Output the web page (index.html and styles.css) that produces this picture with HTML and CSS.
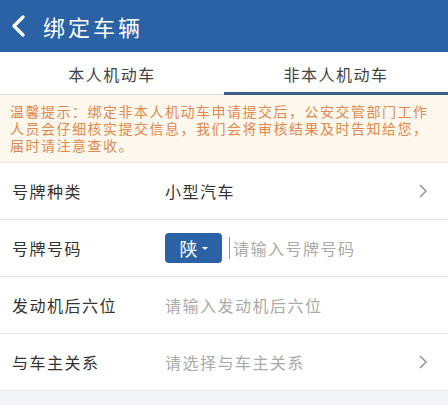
FILE: index.html
```html
<!DOCTYPE html>
<html lang="zh-CN">
<head>
    <meta charset="UTF-8">
    <meta name="viewport" content="width=device-width, initial-scale=1.0">
    <title>绑定车辆</title>
    <link rel="stylesheet" href="styles.css">
</head>
<body>
<div class="header">
    <svg class="back" width="16" height="22" viewBox="0 0 16 22"><path d="M12 2 L3 11 L12 20" fill="none" stroke="#fff" stroke-width="3.2" stroke-linecap="round" stroke-linejoin="round"/></svg>
    <h1>绑定车辆</h1>
</div>

<div class="tabs">
    <div class="tab">本人机动车</div>
    <div class="tab active">非本人机动车</div>
</div>

<div class="notice">
    温馨提示：绑定非本人机动车申请提交后，公安交管部门工作人员会仔细核实提交信息，我们会将审核结果及时告知给您，届时请注意查收。
</div>

<div class="form">
    <div class="row">
        <span class="label">号牌种类</span>
        <span class="value">小型汽车</span>
        <svg class="arrow" width="10" height="16" viewBox="0 0 10 16"><path d="M2 2 L8 8 L2 14" fill="none" stroke="#999" stroke-width="1.6"/></svg>
    </div>
    <div class="row">
        <span class="label">号牌号码</span>
        <span class="prov">陕 <i class="caret"></i></span>
        <span class="cursor"></span>
        <span class="placeholder">请输入号牌号码</span>
    </div>
    <div class="row">
        <span class="label">发动机后六位</span>
        <span class="placeholder">请输入发动机后六位</span>
    </div>
    <div class="row">
        <span class="label">与车主关系</span>
        <span class="placeholder">请选择与车主关系</span>
        <svg class="arrow" width="10" height="16" viewBox="0 0 10 16"><path d="M2 2 L8 8 L2 14" fill="none" stroke="#999" stroke-width="1.6"/></svg>
    </div>
</div>
</body>
</html>
```

FILE: styles.css
```css
body {
    margin: 0;
    font-family: "Noto Sans CJK SC", "Noto Sans", sans-serif;
    background: #f2f4f7;
    color: #333;
}
.header {
    height: 52px;
    background: #2a62a5;
    display: flex;
    align-items: center;
    padding-left: 11px;
}
.back {
    margin-right: 16px;
}
.header h1 {
    margin: 0;
    font-size: 22px;
    font-weight: normal;
    color: #fff;
    letter-spacing: 3px;
}
.tabs {
    display: flex;
    background: #fff;
    height: 43px;
}
.tab {
    flex: 1;
    text-align: center;
    font-size: 16px;
    letter-spacing: 1.5px;
    line-height: 44px;
    color: #444;
    border-bottom: 1px solid #ddd;
}
.tab.active {
    border-bottom: 3px solid #3d5f86;
    height: 40px;
}
.notice {
    background: #fdf8ee;
    color: #e2884c;
    font-size: 14px;
    letter-spacing: 1.5px;
    line-height: 17px;
    padding: 8px 13px 8px 10px;
    border-bottom: 1px solid #ece8e0;
}
.form {
    background: #fff;
}
.row {
    display: flex;
    align-items: center;
    height: 56px;
    border-bottom: 1px solid #e6e6e6;
    padding: 0 20px 0 12px;
    font-size: 16px;
    letter-spacing: 1.5px;
}
.label {
    width: 153px;
    flex-shrink: 0;
    color: #333;
}
.value {
    flex: 1;
    color: #333;
}
.placeholder {
    flex: 1;
    color: #aaa;
}
.arrow {
    flex-shrink: 0;
}
.prov {
    background: #2a62a5;
    color: #fff;
    font-size: 18px;
    letter-spacing: 0;
    border-radius: 4px;
    width: 57px;
    height: 30px;
    line-height: 30px;
    display: inline-flex;
    align-items: center;
    justify-content: center;
    gap: 4px;
}
.caret {
    display: inline-block;
    width: 0;
    height: 0;
    border-left: 3px solid transparent;
    border-right: 3px solid transparent;
    border-top: 3px solid #fff;
}
.cursor {
    width: 1px;
    height: 22px;
    background: #999;
    margin: 0 3px 0 7px;
}
```
